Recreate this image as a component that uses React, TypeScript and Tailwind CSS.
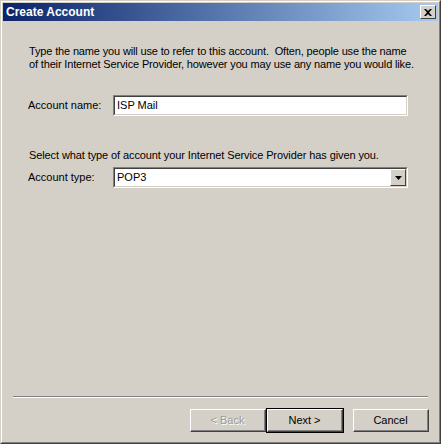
import React from "react";

const font = { fontFamily: '"Liberation Sans", Arial, sans-serif' };

const Btn = ({ label, disabled, isDefault }: { label: string; disabled?: boolean; isDefault?: boolean }) => (
	<div className={isDefault ? "border border-black" : ""}>
		<div className="border-t border-l border-white border-r border-b border-r-[#404040] border-b-[#404040]">
			<div className="flex items-center justify-center bg-[#d4d0c8] border-r border-b border-[#808080] text-[11px] w-[74px] h-[21px]">
				<span className={disabled ? "text-[#9c9a94]" : "text-black"} style={disabled ? { textShadow: "1px 1px 0 #fff" } : undefined}>
					{label}
				</span>
			</div>
		</div>
	</div>
);

const Field = ({ children }: { children: React.ReactNode }) => (
	<div className="border-t border-l border-[#808080] border-r border-b border-r-white border-b-white">
		<div className="border-t border-l border-[#404040] border-r border-b border-r-[#d4d0c8] border-b-[#d4d0c8] bg-white">
			{children}
		</div>
	</div>
);

export default function App() {
	return (
		<div className="w-[441px] h-[444px] bg-[#d4d0c8] flex flex-col text-black" style={font}>
			<div className="flex-1 flex flex-col border-t border-l border-[#d4d0c8] border-r border-b border-r-[#404040] border-b-[#404040]">
				<div className="flex-1 flex flex-col border-t border-l border-white border-r border-b border-r-[#808080] border-b-[#808080] px-[1px] pt-[1px]">
					{/* title bar */}
					<div className="h-[18px] flex items-center justify-between pl-[3px] pr-[2px] bg-[linear-gradient(to_right,#0a246a,#a6caf0)]">
						<span className="text-white font-bold text-[12px] leading-none">Create Account</span>
						<div className="w-[16px] h-[14px] bg-[#d4d0c8] border-t border-l border-white border-r border-b border-r-[#404040] border-b-[#404040] flex items-center justify-center">
							<svg width="8" height="7" viewBox="0 0 8 7">
								<path d="M0 0h2l2 2 2-2h2L5 3.5 8 7H6L4 5 2 7H0l3-3.5z" fill="#000" />
							</svg>
						</div>
					</div>

					<div className="flex-1 flex flex-col text-[11px] leading-[13px]">
						<p className="mt-[24px] ml-[26px] whitespace-nowrap tracking-[-0.15px]">
							Type the name you will use to refer to this account.&nbsp; Often, people use the name
							<br />
							of their Internet Service Provider, however you may use any name you would like.
						</p>

						<div className="flex items-center mt-[24px] ml-[25px]">
							<span className="w-[85px]">Account name:</span>
							<div className="w-[295px]">
								<Field>
									<div className="h-[17px] px-[2px] flex items-center">ISP Mail</div>
								</Field>
							</div>
						</div>

						<p className="mt-[33px] ml-[26px] tracking-[-0.1px]">Select what type of account your Internet Service Provider has given you.</p>

						<div className="flex items-center mt-[5px] ml-[25px]">
							<span className="w-[85px]">Account type:</span>
							<div className="w-[295px]">
								<Field>
									<div className="h-[17px] flex items-center">
										<span className="flex-1 px-[2px]">POP3</span>
										<div className="w-[16px] h-[17px] bg-[#d4d0c8] border-t border-l border-white border-r border-b border-r-[#404040] border-b-[#404040] flex items-center justify-center">
											<svg width="7" height="4" viewBox="0 0 7 4">
												<path d="M0 0h7L3.5 4z" fill="#000" />
											</svg>
										</div>
									</div>
								</Field>
							</div>
						</div>

						<div className="flex-1" />

						<div className="mx-[10px] border-t border-[#808080] border-b border-b-white" />

						<div className="flex justify-end items-center mt-[10px] mb-[9px] mr-[9px]">
							<Btn label="< Back" disabled />
							<Btn label="Next >" isDefault />
							<div className="w-[9px]" />
							<Btn label="Cancel" />
						</div>
					</div>
				</div>
			</div>
		</div>
	);
}
